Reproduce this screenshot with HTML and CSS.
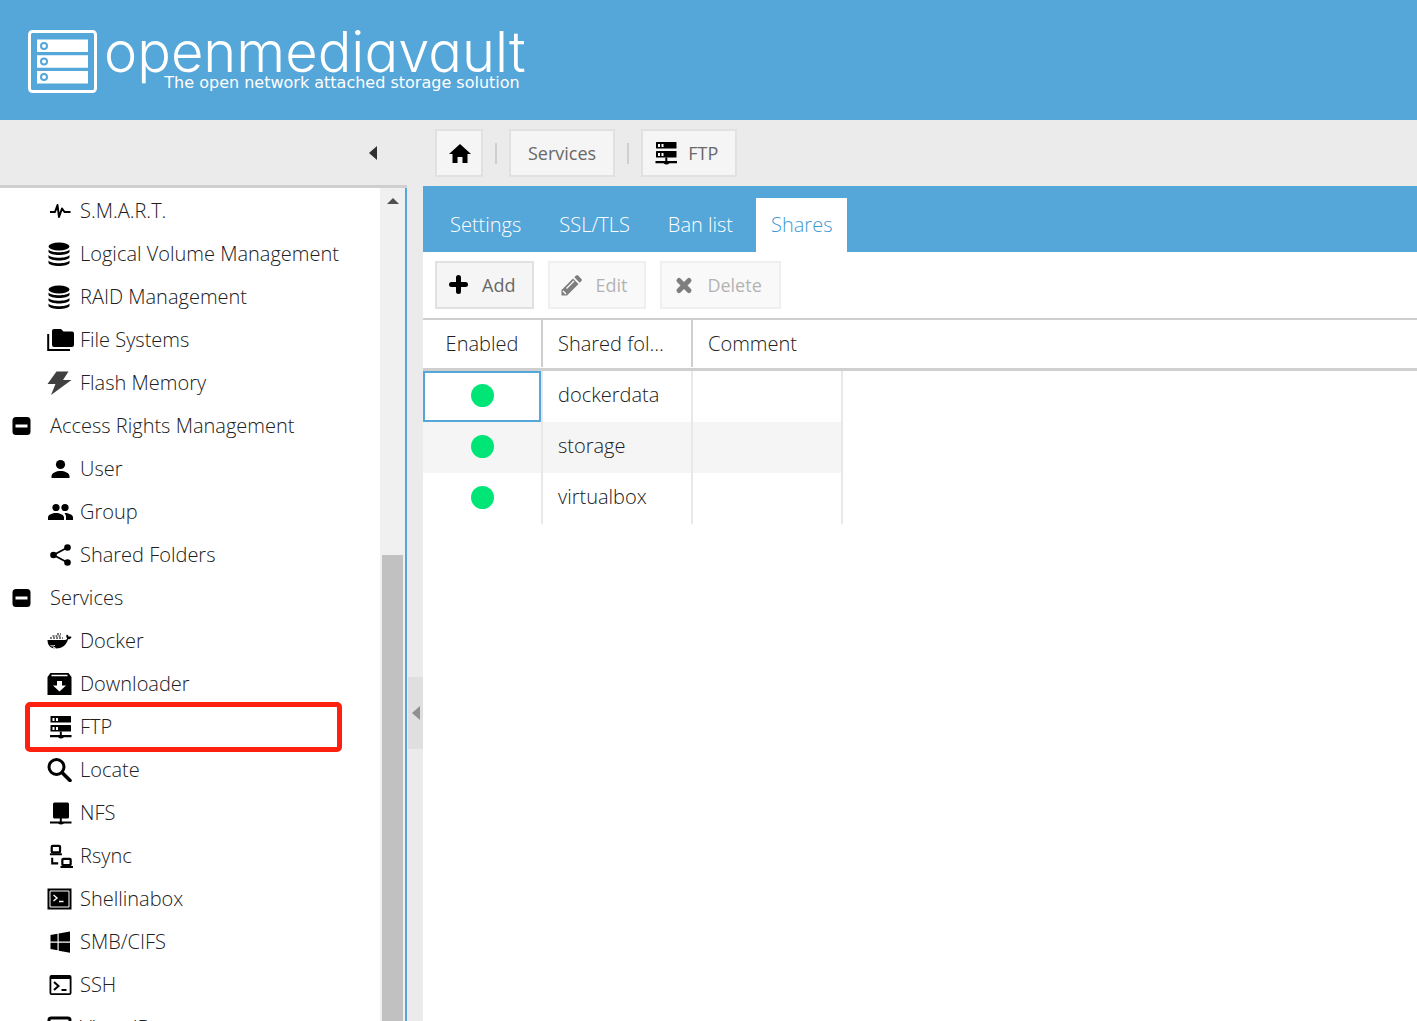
FILE: index.html
```html
<!DOCTYPE html>
<html lang="en">
<head>
<meta charset="utf-8">
<title>openmediavault - FTP</title>
<link rel="stylesheet" href="styles.css">
</head>
<body>
<svg class="defs" aria-hidden="true">
  <symbol id="i-pulse" viewBox="0 0 24 24"><path d="M2.500 13h5l2.500-7 1.500 12 3-8.500 2.500 3.500H23" fill="none" stroke="currentColor" stroke-width="2" stroke-linejoin="round"/></symbol>
  <symbol id="i-db" viewBox="0 0 24 24"><ellipse cx="11.500" cy="4.500" rx="10.500" ry="4"/><path d="M1 7.500c3 3.700 18 3.700 21 0v2.500c-2 4-19 4-21 0zM1 13c3 3.700 18 3.700 21 0v2.500c-2 4-19 4-21 0zM1 18.500c3 3.700 18 3.700 21 0V21c-2 4-19 4-21 0z"/></symbol>
  <symbol id="i-folders" viewBox="0 0 27 24"><path d="M7 1h7l2.500 2.500H25a2 2 0 0 1 2 2V17a2 2 0 0 1-2 2H7a2 2 0 0 1-2-2V3a2 2 0 0 1 2-2z"/><path d="M1.200 6v16H23" fill="none" stroke="currentColor" stroke-width="2"/></symbol>
  <symbol id="i-bolt" viewBox="0 0 24 24"><path d="M9 .5h12L15.500 9H24L3.500 24 8 13H0z"/></symbol>
  <symbol id="i-minus" viewBox="0 0 20 20"><rect x=".5" y="1" width="18" height="18" rx="3.500"/><path d="M3.500 10h12" stroke="#fff" stroke-width="3"/></symbol>
  <symbol id="i-user" viewBox="0 0 24 24"><circle cx="13" cy="7.500" r="4.600"/><path d="M4 21v-2c0-3 5-5 9-5s9 2 9 5v2z"/></symbol>
  <symbol id="i-group" viewBox="0 0 27 24"><circle cx="9" cy="7.500" r="3.600"/><circle cx="18" cy="7.500" r="3.600"/><path d="M1 20v-2.500c0-3 4.500-4.500 8-4.500s8 1.500 8 4.500V20zM17.500 13c4 0 8.500 1.500 8.500 4.500V20h-7v-2.500c0-1.800-.5-3.200-1.500-4.500z"/></symbol>
  <symbol id="i-share" viewBox="0 0 24 24"><circle cx="20" cy="4.500" r="3.300"/><circle cx="6" cy="12" r="3.300"/><circle cx="20" cy="19.500" r="3.300"/><path d="M20 4.500 6 12l14 7.500" fill="none" stroke="currentColor" stroke-width="1.800"/></symbol>
  <symbol id="i-docker" viewBox="0 0 24 24"><path d="M0 11h17.500c1.500 0 2-1 2-2-1-1-1-2.500 0-3.500 1 .5 1.500 1.300 1.500 2.300 1-.3 2-.3 3 .2-.5 1.700-1.700 2.300-3.500 2.300C19 16.500 14 19.500 8.500 19.500 3 19.500 0 16 0 11z"/><path d="M2.500 9h13M5 7h9M9.500 5h4" fill="none" stroke="#777" stroke-width="2" stroke-dasharray="2 1"/><path d="M3 16.500c2 .8 3.500.5 4.500-.3M5.500 18l3 1.500" stroke="#fff" fill="none"/></symbol>
  <symbol id="i-download" viewBox="0 0 24 24"><path d="M3 1h18l3 4v18H0V5z"/><path d="M4 3.500h16" stroke="#fff" stroke-width="1.500"/><path d="M9.500 9h5v4.500h4L12 19.500l-6.500-6h4z" fill="#fff"/></symbol>
  <symbol id="i-server" viewBox="0 0 24 24"><rect x="3" y="1" width="20.500" height="6.500" rx=".5"/><rect x="3" y="10" width="20.500" height="6.500" rx=".5"/><path d="M5 3h2v3H5zM8.500 3h2v3h-2zM5 12h2v3H5zM8.500 12h2v3h-2z" fill="#fff"/><path d="M12.300 16.500h2V20H24v2.200h-7.500q-3 2.500-6 0H2.500V20h9.800z"/></symbol>
  <symbol id="i-search" viewBox="0 0 24 24"><circle cx="9" cy="9" r="7.500" fill="none" stroke="currentColor" stroke-width="3"/><path d="m15 15 7.500 7.500" stroke="currentColor" stroke-width="3.600" stroke-linecap="round"/></symbol>
  <symbol id="i-nas" viewBox="0 0 24 24"><rect x="5.500" y="1.500" width="16" height="16" rx="1.500"/><path d="M12.300 17h2v3.500H24v2h-7.500q-3 2-6 0H2.500v-2h9.800z"/></symbol>
  <symbol id="i-rsync" viewBox="0 0 27 26"><g fill="none" stroke="currentColor" stroke-width="2.400"><rect x="4" y="2" width="9" height="7" rx="1"/><rect x="15.500" y="16" width="9" height="7" rx="1"/><path d="M2 11h13M13.500 24.800H27M4.500 15v6h6.500" stroke-width="2.200"/></g></symbol>
  <symbol id="i-shell" viewBox="0 0 24 24"><path d="M0 1.500h24v21H0z"/><path d="M2.500 4h19v16h-19z" fill="none" stroke="#fff"/><path d="m6 8 3.500 3L6 14M11.500 14.500H16" stroke="#fff" stroke-width="1.400" fill="none"/></symbol>
  <symbol id="i-win" viewBox="0 0 24 24"><path d="M3 5l7-1.200v7.700H3zM11.200 3.500 22.500 1.500v10H11.200zM3 12.700h7v7.600L3 19zM11.200 12.700h11.300v10L11.200 20.700z"/></symbol>
  <symbol id="i-ssh" viewBox="0 0 24 24"><path d="M4 2h18a2 2 0 0 1 2 2v16a2 2 0 0 1-2 2H4a2 2 0 0 1-2-2V4a2 2 0 0 1 2-2zm-.2 4v14.200h18.400V6z" fill-rule="evenodd"/><path d="m6.500 9 4.500 4-4.500 4M14 17h5" stroke="currentColor" stroke-width="2" fill="none"/></symbol>
  <symbol id="i-screen" viewBox="0 0 24 24"><rect x="1.500" y="2" width="21" height="18" rx="2" fill="none" stroke="currentColor" stroke-width="3"/></symbol>
  <symbol id="i-home" viewBox="0 0 24 24"><path d="M13 3l11 10h-3.500v9h-5v-6h-5v6h-5v-9H2z"/></symbol>
  <symbol id="i-plus" viewBox="0 0 24 24"><path d="M11.500 4.500v14M4.500 11.500h14" stroke="currentColor" stroke-width="5" stroke-linecap="round"/></symbol>
  <symbol id="i-pencil" viewBox="0 0 24 24"><path d="M1.500 22.500V17L13 5.500l5.500 5.500L7 22.500zM14.300 4.200l1.800-1.700q1-.8 2 0L21.500 6q.8 1 0 2l-1.800 1.700z"/><path d="m3 18 3 3M6.500 15.500 14 8" stroke="#fcfcfc" stroke-width="1.300"/></symbol>
  <symbol id="i-cross" viewBox="0 0 24 24"><path d="M7 7.500 17 17.500M17 7.500 7 17.500" stroke="currentColor" stroke-width="5" stroke-linecap="round"/></symbol>
</svg>

<header class="banner">
  <a class="logo" href="#">
    <svg class="logo-mark" viewBox="0 0 70 64" aria-hidden="true">
      <rect x="1.500" y="1.500" width="66" height="60" rx="3" fill="none" stroke="#fff" stroke-width="3"/>
      <path d="M9 9.500h51V22H9zM9 25.300h51v12.500H9zM9 41h51v12.500H9z" fill="#fff"/>
      <g fill="none" stroke="#55a6d9" stroke-width="2"><circle cx="16" cy="16" r="3"/><circle cx="16" cy="31.500" r="3"/><circle cx="16" cy="47" r="3"/></g>
    </svg>
    <span class="logo-text"><span class="wordmark">openmediavault</span><span class="tagline">The open network attached storage solution</span></span>
  </a>
</header>

<div class="workspace">
  <nav class="sidebar" aria-label="Navigation">
    <div class="sidebar-head"><button class="collapse" aria-label="Collapse"><span class="arrow-left"></span></button></div>
    <div class="tree-panel">
      <ul class="tree">
        <li><a href="#"><svg class="icon"><use href="#i-pulse"/></svg>S.M.A.R.T.</a></li>
        <li><a href="#"><svg class="icon"><use href="#i-db"/></svg>Logical Volume Management</a></li>
        <li><a href="#"><svg class="icon"><use href="#i-db"/></svg>RAID Management</a></li>
        <li><a href="#"><svg class="icon wide"><use href="#i-folders"/></svg>File Systems</a></li>
        <li><a href="#"><svg class="icon dim"><use href="#i-bolt"/></svg>Flash Memory</a></li>
        <li class="branch"><a href="#"><svg class="expander"><use href="#i-minus"/></svg>Access Rights Management</a></li>
        <li><a href="#"><svg class="icon"><use href="#i-user"/></svg>User</a></li>
        <li><a href="#"><svg class="icon wide"><use href="#i-group"/></svg>Group</a></li>
        <li><a href="#"><svg class="icon"><use href="#i-share"/></svg>Shared Folders</a></li>
        <li class="branch"><a href="#"><svg class="expander"><use href="#i-minus"/></svg>Services</a></li>
        <li><a href="#"><svg class="icon"><use href="#i-docker"/></svg>Docker</a></li>
        <li><a href="#"><svg class="icon"><use href="#i-download"/></svg>Downloader</a></li>
        <li class="marked"><a href="#"><svg class="icon"><use href="#i-server"/></svg>FTP</a></li>
        <li><a href="#"><svg class="icon"><use href="#i-search"/></svg>Locate</a></li>
        <li><a href="#"><svg class="icon"><use href="#i-nas"/></svg>NFS</a></li>
        <li><a href="#"><svg class="icon wide"><use href="#i-rsync"/></svg>Rsync</a></li>
        <li><a href="#"><svg class="icon"><use href="#i-shell"/></svg>Shellinabox</a></li>
        <li><a href="#"><svg class="icon"><use href="#i-win"/></svg>SMB/CIFS</a></li>
        <li><a href="#"><svg class="icon"><use href="#i-ssh"/></svg>SSH</a></li>
        <li><a href="#"><svg class="icon"><use href="#i-screen"/></svg>VirtualBox</a></li>
      </ul>
      <div class="scrollbar" aria-hidden="true"><span class="arrow-up"></span><span class="thumb"></span></div>
    </div>
  </nav>
  <div class="splitter"><button class="splitter-handle" aria-label="Collapse panel"><span class="arrow-left"></span></button></div>

  <main class="content">
    <nav class="crumbs" aria-label="Breadcrumb">
      <button class="btn home" aria-label="Home"><svg class="btn-icon"><use href="#i-home"/></svg></button>
      <span class="sep"></span>
      <button class="btn">Services</button>
      <span class="sep"></span>
      <button class="btn with-icon"><svg class="btn-icon"><use href="#i-server"/></svg>FTP</button>
    </nav>
    <div class="tabs" role="tablist">
      <button class="tab" role="tab">Settings</button>
      <button class="tab" role="tab">SSL/TLS</button>
      <button class="tab" role="tab">Ban list</button>
      <button class="tab active" role="tab" aria-selected="true">Shares</button>
    </div>
    <div class="actions">
      <button class="btn with-icon"><svg class="btn-icon"><use href="#i-plus"/></svg>Add</button>
      <button class="btn with-icon" disabled><svg class="btn-icon"><use href="#i-pencil"/></svg>Edit</button>
      <button class="btn with-icon" disabled><svg class="btn-icon"><use href="#i-cross"/></svg>Delete</button>
    </div>
    <table class="grid">
      <colgroup><col class="col-enabled"><col class="col-data"><col class="col-data"><col></colgroup>
      <thead><tr><th><span>Enabled</span></th><th><span>Shared folder</span></th><th><span>Comment</span></th><th></th></tr></thead>
      <tbody>
        <tr><td class="focused"><span class="dot" role="img" aria-label="Yes"></span></td><td>dockerdata</td><td></td></tr>
        <tr><td><span class="dot" role="img" aria-label="Yes"></span></td><td>storage</td><td></td></tr>
        <tr><td><span class="dot" role="img" aria-label="Yes"></span></td><td>virtualbox</td><td></td></tr>
      </tbody>
    </table>
  </main>
</div>
</body>
</html>
```
FILE: styles.css
```css
:root {
  --blue: #55a6d9;
  --chrome: #ebebeb;
  --line: #cfcfcf;
  --text: #202020;
}
* { box-sizing: border-box; }
body {
  margin: 0;
  height: 100vh;
  display: flex;
  flex-direction: column;
  overflow: hidden;
  background: #fff;
  color: var(--text);
  font: 300 20px/24px "Open Sans", "Noto Sans", sans-serif;
}
button { font: inherit; margin: 0; padding: 0; border: 0; background: none; }
a { color: inherit; text-decoration: none; }
svg { fill: currentColor; flex: none; }
.defs { position: absolute; width: 0; height: 0; }

.banner { flex: none; height: 120px; padding: 30px 28px; background: var(--blue); }
.logo { display: flex; gap: 6px; color: #fff; }
.logo-mark { width: 70px; height: 64px; }
.logo-text { display: flex; flex-direction: column; }
.wordmark { font: 300 56px/44px Inter, sans-serif; font-feature-settings: "cv11"; }
.tagline { align-self: flex-end; padding-right: 6px; font: 400 16px/18px "DejaVu Sans", sans-serif; }

.workspace { flex: 1; min-height: 0; display: flex; }
.sidebar { flex: none; width: 407px; display: flex; flex-direction: column; }
.sidebar-head {
  flex: none;
  height: 68px;
  padding-right: 26px;
  display: flex;
  align-items: center;
  justify-content: flex-end;
  background: var(--chrome);
  border-bottom: 3px solid var(--line);
}
.collapse { display: flex; padding: 4px; }
.arrow-left { border: 7px solid transparent; border-left: 0; border-right: 8px solid #303030; }
.tree-panel { flex: 1; min-height: 0; display: flex; border-right: 2px solid var(--blue); }
.tree { flex: 1; margin: 0; padding: 1px 0 0; list-style: none; overflow: hidden; }
.tree li { position: relative; }
.tree a { display: flex; align-items: center; gap: 8px; height: 43px; padding-left: 47px; white-space: nowrap; }
.tree .branch a { padding-left: 12px; gap: 18px; }
.icon { width: 25px; height: 24px; color: #000; }
.icon.wide { width: 27px; margin-right: -2px; }
.icon.dim { color: #404040; }
.expander { width: 20px; height: 20px; color: #000; }
.marked::after {
  content: "";
  position: absolute;
  inset: -3px 38px -4px 25px;
  border: 5px solid #ff2010;
  border-radius: 5px;
}
.scrollbar { width: 25px; display: flex; flex-direction: column; align-items: center; background: #f0f0f0; }
.arrow-up { margin: 10px 0 351px; border: 6px solid transparent; border-top: 0; border-bottom-color: #505050; }
.thumb { flex: 1; width: 21px; background: #c1c1c1; }
.splitter { flex: none; width: 16px; padding: 557px 0 0 1px; background: var(--chrome); }
.splitter-handle { width: 15px; height: 72px; display: flex; align-items: center; justify-content: center; background: #dfdfdf; }
.splitter-handle .arrow-left { border-right-color: #909090; }

.content { flex: 1; min-width: 0; }
.crumbs, .actions { display: flex; align-items: center; height: 66px; padding: 0 12px; }
.crumbs { background: var(--chrome); }
.actions { gap: 14px; }
.sep { width: 2px; height: 21px; margin: 0 12px; background: var(--line); }
.btn {
  display: flex;
  align-items: center;
  gap: 11px;
  height: 48px;
  padding: 0 17px;
  font-size: 18px;
  font-weight: 400;
  color: #686868;
  background: #f5f5f5;
  border: 2px solid #e1e1e1;
}
.btn.with-icon { padding-left: 10px; }
.btn.home { padding: 0 10px; }
.btn:disabled { opacity: .5; }
.btn-icon { width: 24px; height: 24px; color: #000; }
.tabs { display: flex; align-items: flex-end; gap: 8px; height: 66px; padding: 0 12px; background: var(--blue); }
.tab { height: 54px; padding: 0 15px; color: #fff; }
.tab.active { background: #fff; color: #3f98d2; }

.grid { width: 100%; table-layout: fixed; border-collapse: separate; border-spacing: 0; border-top: 2px solid var(--line); }
.col-enabled { width: 120px; }
.col-data { width: 150px; }
.grid th { height: 51px; padding: 0 0 1px; border-bottom: 3px solid var(--line); font-weight: inherit; text-align: left; }
.grid th span { display: block; height: 47px; padding: 0 24px 0 15px; line-height: 47px; overflow: hidden; text-overflow: ellipsis; white-space: nowrap; }
.grid th:nth-child(-n+2) span { border-right: 2px solid var(--line); }
.grid th:first-child span { padding: 0; text-align: center; }
.grid td { height: 51px; padding: 0 15px 4px; border-right: 2px solid #e8e8e8; line-height: 24px; }
.grid td:first-child { padding: 0 0 4px; text-align: center; }
.grid tr:nth-child(even) td { background: #f5f5f5; }
.grid .focused { box-shadow: inset 0 0 0 2px var(--blue); }
.dot { display: inline-block; width: 23px; height: 23px; vertical-align: middle; border-radius: 50%; background: #00e676; }
```
